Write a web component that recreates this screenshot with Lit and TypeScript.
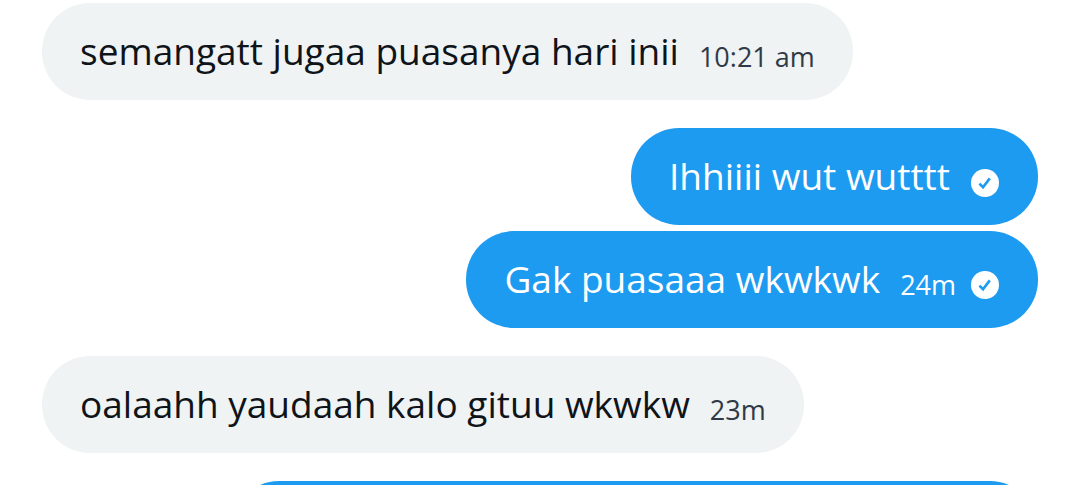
import { LitElement, html, css } from "lit";
import { customElement, property } from "lit/decorators.js";

interface Message {
  text: string;
  time?: string;
  own: boolean;
}

const MESSAGES: Message[][] = [
  [{ text: "semangatt jugaa puasanya hari inii", time: "10:21 am", own: false }],
  [
    { text: "Ihhiiii wut wutttt", own: true },
    { text: "Gak puasaaa wkwkwk", time: "24m", own: true },
  ],
  [{ text: "oalaahh yaudaah kalo gituu wkwkw", time: "23m", own: false }],
];

@customElement("chat-bubble")
export class ChatBubble extends LitElement {
  @property({ attribute: false }) message!: Message;

  static styles = css`
    :host {
      display: block;
      max-width: 84%;
    }
    .bubble {
      display: flex;
      align-items: flex-end;
      gap: 20px;
      box-sizing: border-box;
      padding: 24px 38px;
      border-radius: 48px;
      background: #eff3f4;
      color: #0f1419;
    }
    .own {
      background: #1d9bf0;
      color: #fff;
    }
    .text {
      margin: 0 0 2px;
      font-size: 37px;
      line-height: 47px;
    }
    .meta {
      display: flex;
      align-items: center;
      gap: 14px;
      font-size: 27px;
      line-height: 38px;
      color: #2f3a46;
    }
    .own .meta {
      color: #fff;
    }
    .check {
      width: 30px;
      height: 36px;
    }
  `;

  render() {
    const { text, time, own } = this.message;
    return html`
      <div class="bubble ${own ? "own" : ""}">
        <p class="text">${text}</p>
        <div class="meta">
          ${time ? html`<time>${time}</time>` : null}
          ${own
            ? html`<svg class="check" viewBox="0 0 30 36" role="img" aria-label="Sent">
                <circle cx="15" cy="18" r="14" fill="#fff" />
                <path d="M9.4 18.6 13 22.2 19.8 13.4" fill="none" stroke="#1d9bf0" stroke-width="2.6" />
              </svg>`
            : null}
        </div>
      </div>
    `;
  }
}

@customElement("app-root")
export class AppRoot extends LitElement {
  static styles = css`
    :host {
      display: block;
      height: 100vh;
      overflow: hidden;
      background: #fff;
      font-family: "Open Sans", "Noto Sans", sans-serif;
    }
    .thread {
      display: flex;
      flex-direction: column;
      gap: 28px;
      padding: 3px 42px 0;
    }
    .group {
      display: flex;
      flex-direction: column;
      align-items: flex-start;
      gap: 6px;
    }
    .group.own {
      align-items: flex-end;
    }
    .next {
      box-sizing: border-box;
      width: 81%;
      height: 97px;
      border-radius: 48px;
      background: #1d9bf0;
    }
  `;

  render() {
    return html`
      <main class="thread">
        ${MESSAGES.map(
          (group) => html`
            <section class="group ${group[0].own ? "own" : ""}">
              ${group.map((m) => html`<chat-bubble .message=${m}></chat-bubble>`)}
            </section>
          `,
        )}
        <section class="group own"><div class="next"></div></section>
      </main>
    `;
  }
}
